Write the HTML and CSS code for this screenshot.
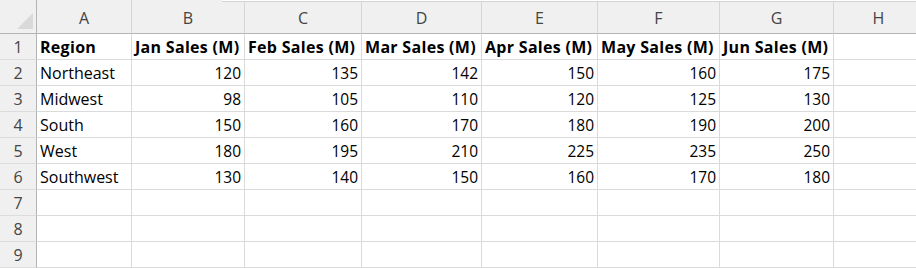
FILE: index.html
```html
<!DOCTYPE html>
<html lang="en">
<head>
    <meta charset="UTF-8">
    <title>Sales by Region</title>
    <link rel="stylesheet" href="styles.css">
</head>
<body>

<div class="sheet">
    <div class="top-edge"></div>

    <div class="corner"><span class="corner-tri"></span></div>
    <div class="col-head">A</div>
    <div class="col-head">B</div>
    <div class="col-head">C</div>
    <div class="col-head">D</div>
    <div class="col-head">E</div>
    <div class="col-head">F</div>
    <div class="col-head">G</div>
    <div class="col-head">H</div>

    <div class="row-head">1</div>
    <div class="cell bold">Region</div>
    <div class="cell bold">Jan Sales (M)</div>
    <div class="cell bold">Feb Sales (M)</div>
    <div class="cell bold">Mar Sales (M)</div>
    <div class="cell bold">Apr Sales (M)</div>
    <div class="cell bold">May Sales (M)</div>
    <div class="cell bold">Jun Sales (M)</div>
    <div class="cell"></div>

    <div class="row-head">2</div>
    <div class="cell">Northeast</div>
    <div class="cell num">120</div>
    <div class="cell num">135</div>
    <div class="cell num">142</div>
    <div class="cell num">150</div>
    <div class="cell num">160</div>
    <div class="cell num">175</div>
    <div class="cell"></div>

    <div class="row-head">3</div>
    <div class="cell">Midwest</div>
    <div class="cell num">98</div>
    <div class="cell num">105</div>
    <div class="cell num">110</div>
    <div class="cell num">120</div>
    <div class="cell num">125</div>
    <div class="cell num">130</div>
    <div class="cell"></div>

    <div class="row-head">4</div>
    <div class="cell">South</div>
    <div class="cell num">150</div>
    <div class="cell num">160</div>
    <div class="cell num">170</div>
    <div class="cell num">180</div>
    <div class="cell num">190</div>
    <div class="cell num">200</div>
    <div class="cell"></div>

    <div class="row-head">5</div>
    <div class="cell">West</div>
    <div class="cell num">180</div>
    <div class="cell num">195</div>
    <div class="cell num">210</div>
    <div class="cell num">225</div>
    <div class="cell num">235</div>
    <div class="cell num">250</div>
    <div class="cell"></div>

    <div class="row-head">6</div>
    <div class="cell">Southwest</div>
    <div class="cell num">130</div>
    <div class="cell num">140</div>
    <div class="cell num">150</div>
    <div class="cell num">160</div>
    <div class="cell num">170</div>
    <div class="cell num">180</div>
    <div class="cell"></div>

    <div class="row-head">7</div>
    <div class="cell"></div><div class="cell"></div><div class="cell"></div><div class="cell"></div>
    <div class="cell"></div><div class="cell"></div><div class="cell"></div><div class="cell"></div>

    <div class="row-head">8</div>
    <div class="cell"></div><div class="cell"></div><div class="cell"></div><div class="cell"></div>
    <div class="cell"></div><div class="cell"></div><div class="cell"></div><div class="cell"></div>

    <div class="row-head">9</div>
    <div class="cell"></div><div class="cell"></div><div class="cell"></div><div class="cell"></div>
    <div class="cell"></div><div class="cell"></div><div class="cell"></div><div class="cell"></div>
</div>

</body>
</html>
```

FILE: styles.css
```css
* {
    box-sizing: border-box;
}

body {
    margin: 0;
    background: #ffffff;
    overflow: hidden;
}

.sheet {
    position: relative;
    display: grid;
    grid-template-columns: 37px 95px 113px 117px 120px 116px 122px 114px 90px;
    grid-template-rows: 34px repeat(9, 26px);
    width: 916px;
    font-family: "Open Sans", "Noto Sans", sans-serif;
    font-size: 16px;
    color: #000;
}

/* thin strip along the top edge, right of the rounded tab */
.top-edge {
    position: absolute;
    top: 0;
    left: 222px;
    right: 0;
    height: 2px;
    background: #ffffff;
    border-bottom: 1px solid #d2d2d2;
    border-top-left-radius: 3px;
}

.corner {
    position: relative;
    background: #f0f0f0;
    border-right: 1px solid #b4b4b4;
    border-bottom: 1px solid #b4b4b4;
}

.corner-tri {
    position: absolute;
    right: 3px;
    bottom: 4px;
    width: 0;
    height: 0;
    border-left: 16px solid transparent;
    border-bottom: 16px solid #d9d9d9;
}

.col-head {
    display: flex;
    align-items: center;
    justify-content: center;
    padding-top: 2px;
    background: #f0f0f0;
    border-right: 1px solid #d6d6d6;
    border-bottom: 1px solid #b4b4b4;
    color: #444444;
    font-size: 16px;
}

.row-head {
    display: flex;
    align-items: center;
    justify-content: center;
    background: #f0f0f0;
    border-right: 1px solid #b4b4b4;
    border-bottom: 1px solid #dcdcdc;
    color: #444444;
    font-size: 16px;
}

.cell {
    display: flex;
    align-items: center;
    padding: 1px 3px 0 3px;
    border-right: 1px solid #dadada;
    border-bottom: 1px solid #dadada;
    white-space: nowrap;
    overflow: hidden;
}

.bold {
    font-weight: bold;
    letter-spacing: 0.3px;
}

.num {
    justify-content: flex-end;
    font-size: 15.5px;
}
```
